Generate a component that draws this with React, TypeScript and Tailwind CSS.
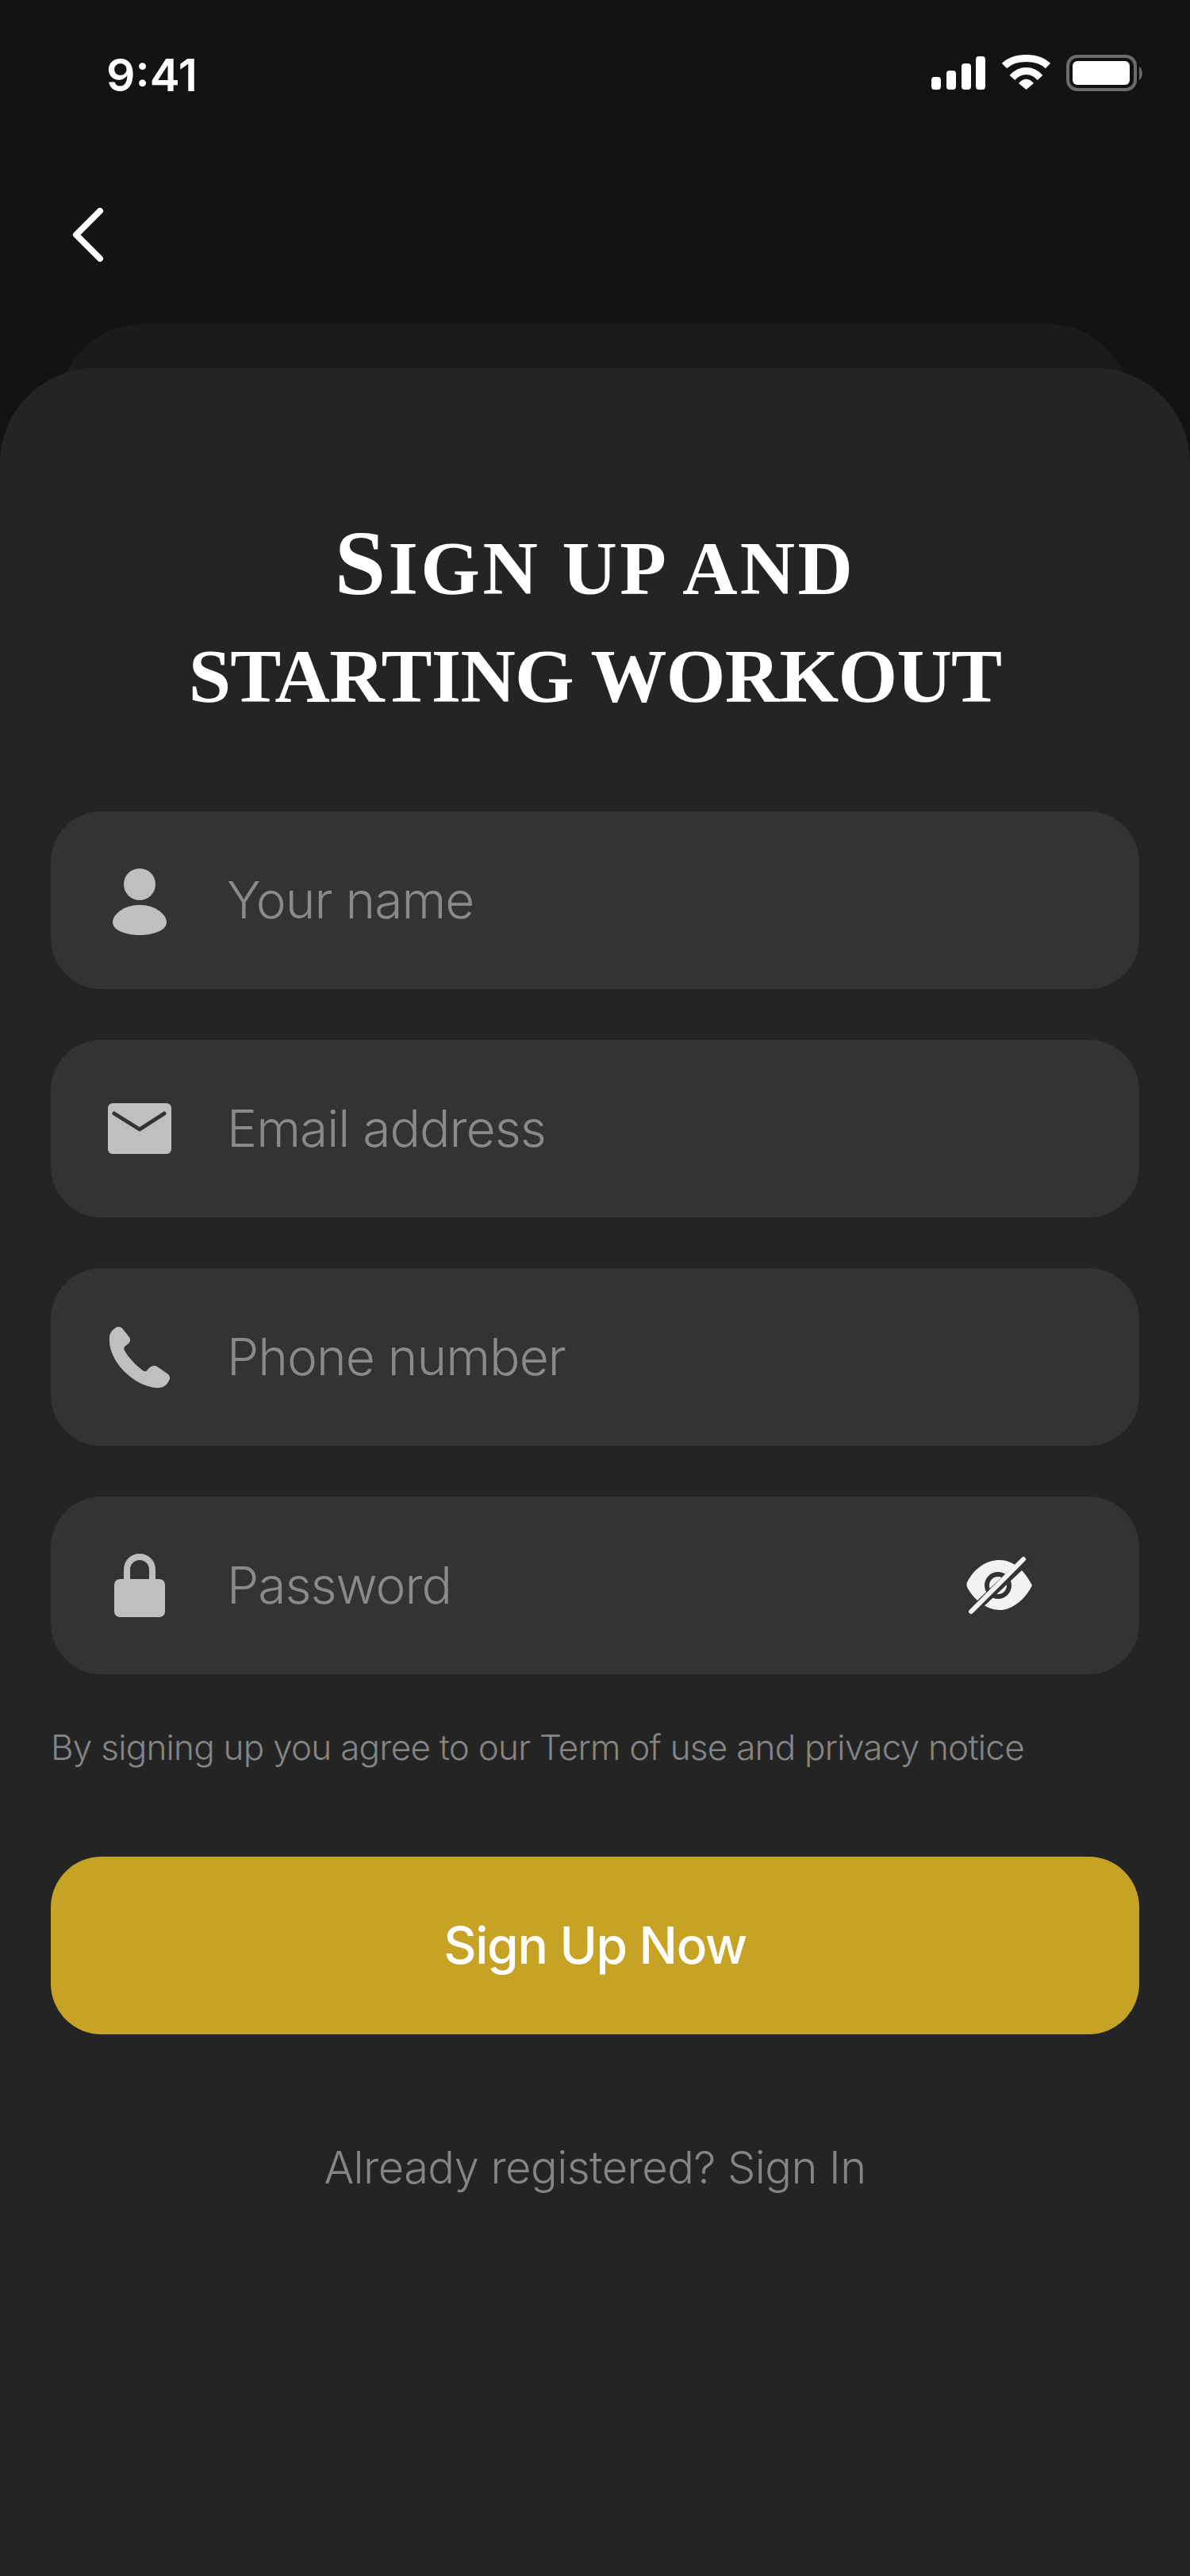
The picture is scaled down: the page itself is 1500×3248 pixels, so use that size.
import React from 'react';

const FONT = "font-['Inter','Liberation_Sans',sans-serif]";

function PersonIcon() {
  return (
    <svg width="70" height="84" viewBox="0 0 70 84" fill="#bfbfbf" className="mt-[4px]">
      <circle cx="35" cy="20" r="20" />
      <path d="M35 46 C55 46 69 58 69 68 C69 78 52 84 35 84 C18 84 1 78 1 68 C1 58 15 46 35 46 Z" />
    </svg>
  );
}

function MailIcon() {
  return (
    <svg width="80" height="64" viewBox="0 0 80 64">
      <rect width="80" height="64" rx="6" fill="#bfbfbf" />
      <path d="M8 13 L40 33 L71 13" fill="none" stroke="#333" strokeWidth="5" strokeLinecap="round" strokeLinejoin="round" />
    </svg>
  );
}

function PhoneIcon() {
  return (
    <svg width="76" height="77" viewBox="0 0 76 77" fill="#bfbfbf">
      <path d="M8 1 C11 -1 15 0 17 3 L25 13 C27 16 26 19 24 21 L20 24 C18 26 18 28 19 30 C24 39 33 48 42 55 C44 57 47 56 48 54 L51 51 C54 49 57 48 60 50 L73 59 C76 61 77 65 75 68 C72 74 67 77 60 77 C44 76 26 66 13 50 C3 37 -1 24 0 14 C0 8 3 4 8 1 Z" />
    </svg>
  );
}

function LockIcon() {
  return (
    <svg width="64" height="80" viewBox="0 0 64 80" fill="#bfbfbf">
      <path d="M16 36 V20 A16 16 0 0 1 48 20 V36" fill="none" stroke="#bfbfbf" strokeWidth="8" />
      <rect y="32" width="64" height="48" rx="7" />
    </svg>
  );
}

function EyeOffIcon() {
  return (
    <svg width="84" height="76" viewBox="0 0 84 76">
      <path d="M1 34 C10 16 26 6 42 6 C60 6 74 20 83 38 C74 56 58 69 42 69 C26 69 9 56 1 40 Q0 37 1 34 Z" fill="#f2f2f2" />
      <circle cx="40" cy="38" r="17" fill="#333" />
      <circle cx="40" cy="38" r="11" fill="#f2f2f2" />
      <path d="M5 73 L79 3" stroke="#333" strokeWidth="11" />
      <path d="M6 71 L72 5" stroke="#f2f2f2" strokeWidth="6" strokeLinecap="round" />
    </svg>
  );
}

const FIELDS = [
  { label: 'Your name', icon: <PersonIcon /> },
  { label: 'Email address', icon: <MailIcon /> },
  { label: 'Phone number', icon: <PhoneIcon /> },
  { label: 'Password', icon: <LockIcon />, trailing: <EyeOffIcon /> },
];

function Field({ label, icon, trailing }: { label: string; icon: React.ReactNode; trailing?: React.ReactNode }) {
  return (
    <div className="flex h-[224px] items-center rounded-[64px] bg-[#333333]">
      <div className="flex w-[224px] shrink-0 items-center justify-center">{icon}</div>
      <span className="-ml-[2px] flex-1 text-[64px] font-light tracking-[-0.015em] text-[#8a8a8a]">{label}</span>
      {trailing && <div className="mr-[134px] flex">{trailing}</div>}
    </div>
  );
}

export default function App() {
  return (
    <div className={`${FONT} flex h-[3248px] w-[1500px] flex-col overflow-hidden bg-[#131313]`}>
      <div className="flex h-[190px] items-start justify-between pl-[134px] pr-[59px] pt-[60px]">
        <span className="text-[57px] font-semibold leading-[70px] text-white">9:41</span>
        <svg width="267" height="46" viewBox="0 0 267 46" className="mt-[9px]">
          <g fill="#fff">
            <rect x="0" y="28" width="12" height="16" rx="4" />
            <rect x="19" y="20" width="12" height="24" rx="4" />
            <rect x="38" y="11" width="12" height="33" rx="4" />
            <rect x="56" y="2" width="12" height="42" rx="4" />
          </g>
          <path d="M92 14 C105 1.3 134 1.3 147 14" fill="none" stroke="#fff" strokeWidth="9" />
          <path d="M102 29 C112 17.7 127 17.7 137 29" fill="none" stroke="#fff" strokeWidth="9" />
          <path d="M110 36 C116 29 123 29 129 36 L119.5 44 Z" fill="#fff" />
          <rect x="172" y="2" width="85" height="42" rx="12" fill="none" stroke="#6b6b6b" strokeWidth="4" />
          <rect x="178" y="8" width="72" height="30" rx="6" fill="#fff" />
          <path d="M262 15 C267 18 267 29 262 32 Z" fill="#6b6b6b" />
        </svg>
      </div>
      <div className="flex h-[218px] items-start pl-[90px] pt-[72px]">
        <svg width="44" height="68" viewBox="0 0 44 68" fill="none" stroke="#fff" strokeWidth="8" strokeLinecap="round" strokeLinejoin="round">
          <path d="M36 4 L6 34 L36 64" />
        </svg>
      </div>
      <div className="mx-[72px] h-[110px] shrink-0 rounded-t-[110px] bg-[#1b1b1b]" />
      <div className="-mt-[54px] flex flex-1 flex-col rounded-t-[120px] bg-[#242424] px-[64px]">
        <h1 className="pt-[178px] text-center font-['Liberation_Serif',serif] text-[96px] font-bold uppercase leading-[136px] text-white">
          <span className="block tracking-[3.4px]">
            <span className="text-[116px]">S</span>ign up and
          </span>
          <span className="block tracking-[-0.7px]">starting workout</span>
        </h1>
        <div className="mt-[102px] flex flex-col gap-[64px]">
          {FIELDS.map((f) => (
            <Field key={f.label} label={f.label} icon={f.icon} trailing={f.trailing} />
          ))}
        </div>
        <p className="mt-[62px] text-[44px] font-light leading-[60px] tracking-[-0.017em] text-[#858585]">
          By signing up you agree to our Term of use and privacy notice
        </p>
        <button className="mt-[108px] flex h-[224px] items-center justify-center rounded-[64px] bg-[#c7a325] text-[64px] font-medium tracking-[-0.02em] text-white">
          Sign Up Now
        </button>
        <p className="mt-[132px] text-center text-[56px] font-light leading-[72px] tracking-[-0.01em] text-[#858585]">
          Already registered? Sign In
        </p>
      </div>
    </div>
  );
}
